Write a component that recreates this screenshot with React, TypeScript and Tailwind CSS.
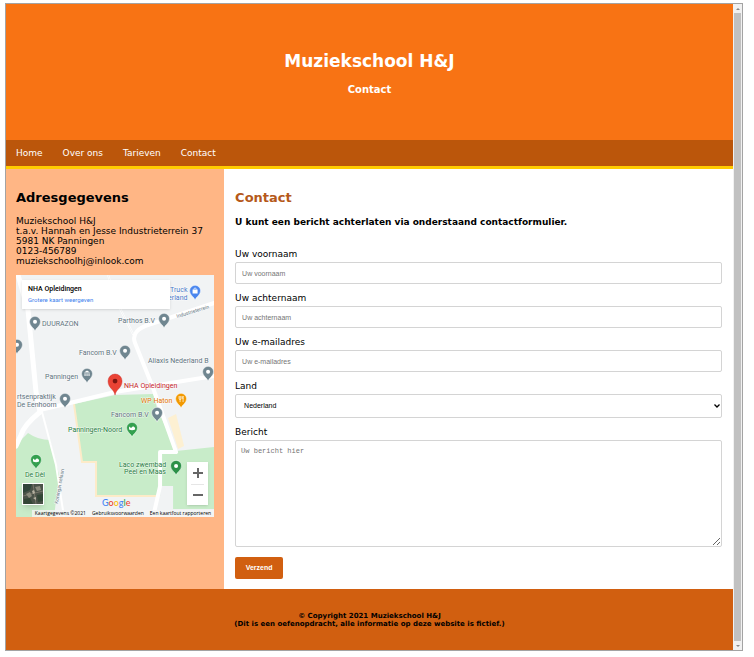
import type { ReactNode } from 'react';

const navItems = ['Home', 'Over ons', 'Tarieven', 'Contact'];

const textFields = [
  { id: 'voornaam', label: 'Uw voornaam', type: 'text' },
  { id: 'achternaam', label: 'Uw achternaam', type: 'text' },
  { id: 'email', label: 'Uw e-mailadres', type: 'email' },
];

const labelClass = 'block text-[9px] leading-3';
const fieldClass =
  "block w-full rounded-xs border border-[#d4d4d4] bg-white px-1.5 font-['Liberation_Sans',Arial,sans-serif] text-[7px] placeholder:text-[#757575]";

function Pin({ x, y, color, children }: { x: number; y: number; color: string; children?: ReactNode }) {
  return (
    <g transform={`translate(${x} ${y})`}>
      <path
        d="M0 8C-.8 5-5.500 3.200-5.500-1.200A5.500 5.500 0 0 1 5.500-1.200C5.500 3.200.8 5 0 8Z"
        fill={color}
        stroke="#fff"
        strokeWidth=".5"
      />
      {children ?? <circle cy="-1.200" r="2" fill="#fff" />}
    </g>
  );
}

function Tree() {
  return <path d="M-3 .5v-3l2 1.500 2-1.800 2 1.500v1.800q-3 1.500-6 0Z" fill="#fff" />;
}

function LocationMap() {
  return (
    <svg viewBox="0 0 198 242" className="block w-full font-[Roboto,sans-serif]" role="img" aria-label="Kaart van Panningen">
      <rect width="198" height="242" fill="#f1f3f4" />
      <path d="M58 129 99 120 137 119 141 133 160 176 198 172V234H157V211L144 211V221H80V186H66Z" fill="#c8ecc9" />
      <path d="M0 170 12 158Q22 165 34 165L43 200 38 242H0Z" fill="#c8ecc9" />
      <path d="M58 129 66 187H80V221H142" fill="none" stroke="#fdebc8" strokeWidth="2" />
      <path d="M152 143 160 139 168 171 162 174Z" fill="#fdf0d2" />
      <g fill="none" stroke="#fff" strokeLinecap="round" strokeLinejoin="round">
        <path d="M2 0 12 35 20 117 24 137" strokeWidth="5" />
        <path d="M24 137Q8 150 5 160L0 171" strokeWidth="5" />
        <path d="M24 135 58 127 99 117 198 101" strokeWidth="4" />
        <path d="M26 137 40 190 48 242" strokeWidth="2" />
        <path d="M92 0 101 28 117 59" strokeWidth="2" />
        <path d="M198 28 135 49Q114 55 119 68L137 113 160 177H144V211L137 242" strokeWidth="4" />
      </g>
      <path d="M92 0 101 28 117 59" fill="none" stroke="#e3e6e8" strokeWidth=".5" />

      <Pin x={19} y={48} color="#708690" />
      <Pin x={148} y={45} color="#708690" />
      <Pin x={109} y={77} color="#708690" />
      <Pin x={1} y={71} color="#708690" />
      <Pin x={192} y={98} color="#708690" />
      <Pin x={49} y={125} color="#708690" />
      <Pin x={141} y={139} color="#708690" />
      <Pin x={71} y={100} color="#708690">
        <path d="M-3-2.500 0-4.500 3-2.500ZM-2.500-1.800h1V1h-1ZM-.5-1.800h1V1h-1ZM1.500-1.800h1V1h-1Z" fill="#fff" />
      </Pin>
      <Pin x={179} y={17} color="#4a86ee">
        <path d="M-2.500-2.500h5v4h-5Z" fill="#fff" />
        <path d="M-1.300-2.500a1.300 1.500 0 0 1 2.600 0" fill="none" stroke="#fff" strokeWidth=".7" />
      </Pin>
      <Pin x={165} y={125} color="#f29900">
        <path d="M-2-4v2.500q0 1 1 1T0-1.500V-4M-1-4v6M2-4v6M2-4q-1 2 0 3" fill="none" stroke="#fff" strokeWidth=".7" />
      </Pin>
      <Pin x={116} y={154} color="#34a04f"><Tree /></Pin>
      <Pin x={20} y={186} color="#34a04f"><Tree /></Pin>
      <Pin x={160} y={192} color="#2c9148" />
      <path d="M99 120C98 114 92 113 92 106A7 7 0 0 1 106 106C106 113 100 114 99 120Z" fill="#ea4335" stroke="#c5221f" strokeWidth=".4" />
      <circle cx="99" cy="106" r="2.400" fill="#7b1510" />

      <g fontSize="7" fill="#60727d" stroke="#fff" strokeWidth="1" paintOrder="stroke" strokeOpacity=".7">
        <text x="26" y="51">DUURAZON</text>
        <text x="102" y="48">Parthos B.V</text>
        <text x="63" y="80">Fancom B.V</text>
        <text x="132" y="88">Aliaxis Nederland B</text>
        <text x="29" y="104">Panningen</text>
        <text x="1" y="124">rtsenpraktijk</text>
        <text x="1" y="132">De Eenhoorn</text>
        <text x="95" y="142">Fancom B.V</text>
        <text x="154" y="17" fill="#4a79c9">Truck</text>
        <text x="152" y="25" fill="#4a79c9">erland</text>
        <text x="108" y="113" fill="#c5221f">NHA Opleidingen</text>
        <text x="125" y="128" fill="#e37400">WP Haton</text>
        <g fill="#267c41">
          <text x="52" y="157">Panningen-Noord</text>
          <text x="9" y="202">De Dèl</text>
          <text x="103" y="192">Laco zwembad</text>
          <text x="108" y="199">Peel en Maas</text>
        </g>
        <text transform="translate(161 43) rotate(-17)" fontSize="5">Industrieterrein</text>
        <text transform="translate(42 229) rotate(-80)" fontSize="5">Koningin selaan</text>
      </g>
      <text x="86" y="231" fontSize="9" fontWeight="500" className="font-[Lato,sans-serif]">
        <tspan fill="#4285f4">G</tspan><tspan fill="#ea4335">o</tspan><tspan fill="#fbbc04">o</tspan><tspan fill="#4285f4">g</tspan><tspan fill="#34a853">l</tspan><tspan fill="#ea4335">e</tspan>
      </text>
    </svg>
  );
}

function Satellite() {
  return (
    <svg viewBox="0 0 20 20" className="block size-full" aria-hidden="true">
      <rect width="20" height="20" fill="#4b5349" />
      <path d="M0 0h9l-2 6-7 3Z" fill="#30463a" />
      <path d="M10 0 13 20M0 12 20 7" stroke="#777568" strokeWidth="1" />
      <path d="M3 10l4-2 2 4-3 2ZM12 3l5-1 1 4-4 1Z" fill="#8b8b7c" />
      <path d="M1 15l6-1 3 6H1ZM14 11l6-1v7l-5 1Z" fill="#334636" />
      <path d="M9 7l2-1 1 3-2 1ZM10 14l3-1v3Z" fill="#b4b0a0" />
    </svg>
  );
}

function MapEmbed() {
  return (
    <div className="relative mt-[9px] overflow-hidden font-[Roboto,sans-serif]">
      <LocationMap />
      <div className="absolute top-[5px] left-1.5 w-[148px] bg-white px-1.5 py-1 shadow-sm">
        <p className="text-[7px] leading-[11px] font-medium text-black">NHA Opleidingen</p>
        <a href="#kaart" className="block text-[6px] leading-[10px] text-[#427fed]">Grotere kaart weergeven</a>
      </div>
      <button type="button" aria-label="Satelliet" className="absolute bottom-3 left-1.5 size-[22px] border border-white shadow-md">
        <Satellite />
      </button>
      <div className="absolute right-1.5 bottom-3 w-[21px] bg-white text-[#666] shadow-sm">
        <button type="button" aria-label="Inzoomen" className="flex h-[22px] w-full items-center justify-center">
          <svg viewBox="0 0 10 10" className="size-2.5"><path d="M5 0v10M0 5h10" stroke="currentColor" strokeWidth="2" /></svg>
        </button>
        <hr className="mx-1 border-[#e6e6e6]" />
        <button type="button" aria-label="Uitzoomen" className="flex h-5 w-full items-center justify-center">
          <svg viewBox="0 0 10 10" className="size-2.5"><path d="M0 5h10" stroke="currentColor" strokeWidth="2" /></svg>
        </button>
      </div>
      <div className="absolute right-0 bottom-0 flex gap-1.5 bg-[#f5f5f5]/80 px-[3px] font-['Open_Sans',sans-serif] text-[5px] leading-[7px] whitespace-nowrap text-black">
        <span>Kaartgegevens ©2021</span>
        <a href="#voorwaarden">Gebruiksvoorwaarden</a>
        <a href="#fout">Een kaartfout rapporteren</a>
      </div>
    </div>
  );
}

function Sidebar() {
  return (
    <aside className="w-[30%] shrink-0 bg-[#ffb685] px-2.5 pt-[21px]">
      <h2 className="text-[13px] leading-4 font-bold">Adresgegevens</h2>
      <address className="mt-2.5 text-[9px] leading-[10px] whitespace-nowrap not-italic">
        Muziekschool H&amp;J<br />
        t.a.v. Hannah en Jesse Industrieterrein 37<br />
        5981 NK Panningen<br />
        0123-456789<br />
        muziekschoolhj@inlook.com
      </address>
      <MapEmbed />
    </aside>
  );
}

function ContactForm() {
  return (
    <form className="mt-5">
      {textFields.map((field) => (
        <div key={field.id} className="mb-2">
          <label htmlFor={field.id} className={labelClass}>{field.label}</label>
          <input id={field.id} type={field.type} placeholder={field.label} className={`${fieldClass} mt-0.5 h-[22px]`} />
        </div>
      ))}
      <div className="mb-2">
        <label htmlFor="land" className={labelClass}>Land</label>
        <div className="relative mt-0.5">
          <select id="land" className={`${fieldClass} h-6 appearance-none pl-2 text-black`}>
            <option>Nederland</option>
            <option>België</option>
          </select>
          <svg viewBox="0 0 6 4" className="pointer-events-none absolute top-2.5 right-0.5 h-1 w-1.5" aria-hidden="true">
            <path d="M.5.5 3 3 5.500.5" fill="none" stroke="#000" strokeWidth="1.300" />
          </svg>
        </div>
      </div>
      <label htmlFor="bericht" className={labelClass}>Bericht</label>
      <textarea
        id="bericht"
        placeholder="Uw bericht hier"
        className="mt-0.5 block h-[107px] w-full rounded-xs border border-[#d4d4d4] bg-white px-[5px] py-1.5 font-['Liberation_Mono',monospace] text-[7px] leading-2 placeholder:text-[#757575]"
      />
      <button
        type="submit"
        className="mt-2.5 block h-[22px] w-12 rounded-xs bg-[#d15f10] font-['Liberation_Sans',Arial,sans-serif] text-[7px] font-bold text-white"
      >
        Verzend
      </button>
    </form>
  );
}

function Scrollbar() {
  return (
    <div className="flex w-[9px] shrink-0 flex-col items-center bg-[#f1f1f1]" aria-hidden="true">
      <svg viewBox="0 0 8 9" className="h-[9px] w-2"><path d="M2 6 4 4 6 6Z" fill="#888" /></svg>
      <div className="w-[7px] grow bg-[#c1c1c1]" />
      <svg viewBox="0 0 8 9" className="h-[9px] w-2"><path d="M2 4 4 6 6 4Z" fill="#888" /></svg>
    </div>
  );
}

export default function App() {
  return (
    <div className="bg-white pt-[3px] pr-[11px] pb-1.5 pl-[5px] font-['DejaVu_Sans',Verdana,sans-serif] text-black">
      <div className="flex border border-[#a3a3a3]">
        <div className="min-w-0 grow">
          <header className="bg-[#f87314] pt-[45px] pb-11 text-center font-bold text-white">
            <h1 className="text-[17px] leading-6">Muziekschool H&amp;J</h1>
            <p className="mt-[11px] text-[10px] leading-3">Contact</p>
          </header>
          <nav className="border-b-3 border-[#ffcc00] bg-[#bb560b]">
            <ul className="flex gap-5 px-2.5">
              {navItems.map((item) => (
                <li key={item}>
                  <a href="#" className="block text-[9px] leading-[26px] text-white">{item}</a>
                </li>
              ))}
            </ul>
          </nav>
          <div className="flex">
            <Sidebar />
            <main className="min-w-0 grow bg-white px-[11px] pt-[21px] pb-2.5">
              <h2 className="text-[13px] leading-4 font-bold text-[#b5591a]">Contact</h2>
              <p className="mt-2.5 text-[9px] leading-3 font-bold">
                U kunt een bericht achterlaten via onderstaand contactformulier.
              </p>
              <ContactForm />
            </main>
          </div>
          <footer className="bg-[#d15f10] pt-[23px] pb-[22px] text-center text-[7px] leading-2 font-bold">
            <p>© Copyright 2021 Muziekschool H&amp;J</p>
            <p>(Dit is een oefenopdracht, alle informatie op deze website is fictief.)</p>
          </footer>
        </div>
        <Scrollbar />
      </div>
    </div>
  );
}
